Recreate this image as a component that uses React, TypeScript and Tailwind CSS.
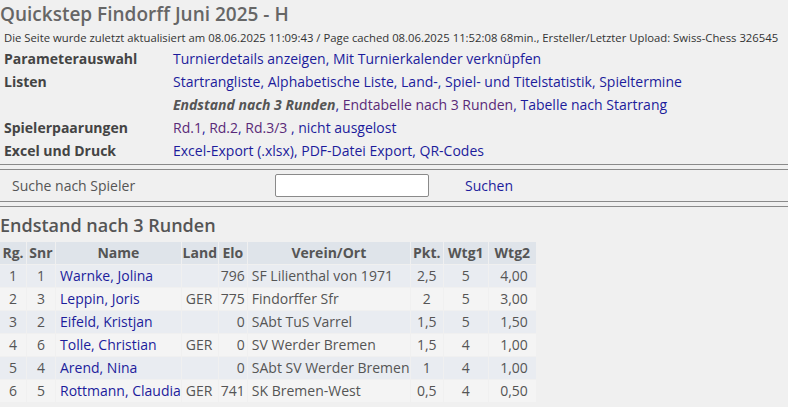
import React from "react";

const F = { fontFamily: '"Open Sans", "Noto Sans", sans-serif' };

const rows = [
  ["1", "1", "Warnke, Jolina", "", "796", "SF Lilienthal von 1971", "2,5", "5", "4,00"],
  ["2", "3", "Leppin, Joris", "GER", "775", "Findorffer Sfr", "2", "5", "3,00"],
  ["3", "2", "Eifeld, Kristjan", "", "0", "SAbt TuS Varrel", "1,5", "5", "1,50"],
  ["4", "6", "Tolle, Christian", "GER", "0", "SV Werder Bremen", "1,5", "4", "1,00"],
  ["5", "4", "Arend, Nina", "", "0", "SAbt SV Werder Bremen", "1", "4", "1,00"],
  ["6", "5", "Rottmann, Claudia", "GER", "741", "SK Bremen-West", "0,5", "4", "0,50"],
];

const L = "text-[#1c1c9c]";
const V = "text-[#5a2a78]";

export default function App() {
  return (
    <div className="w-[788px] h-[407px] overflow-hidden bg-[#f0f0f0] text-[#444]" style={F}>
      <div className="pl-0 pt-[2px] h-[27px] text-[19px] leading-[25px] font-semibold text-[#666]">
        Quickstep Findorff Juni 2025 - H
      </div>
      <div className="pl-[4px] mt-[4px] h-[14px] text-[11.3px] leading-[14px] text-[#333] whitespace-nowrap">
        Die Seite wurde zuletzt aktualisiert am 08.06.2025 11:09:43 / Page cached 08.06.2025 11:52:08 68min., Ersteller/Letzter Upload: Swiss-Chess 326545
      </div>
      <div className="mt-[2px] text-[14px] leading-[20px]">
        <div className="flex h-[23px] items-center">
          <div className="w-[173px] pl-[4px] font-bold text-[#444]">Parameterauswahl</div>
          <div className={L}>Turnierdetails anzeigen, Mit Turnierkalender verknüpfen</div>
        </div>
        <div className="flex h-[23px] items-center">
          <div className="w-[173px] pl-[4px] font-bold text-[#444]">Listen</div>
          <div className={L}>Startrangliste, Alphabetische Liste, Land-, Spiel- und Titelstatistik, Spieltermine</div>
        </div>
        <div className="flex h-[23px] items-center">
          <div className="w-[173px] pl-[4px]"></div>
          <div>
            <span className="font-bold italic text-[#555]">Endstand nach 3 Runden</span>
            <span className={L}>, </span>
            <span className={V}>Endtabelle nach 3 Runden</span>
            <span className={L}>, Tabelle nach Startrang</span>
          </div>
        </div>
        <div className="flex h-[23.5px] items-center">
          <div className="w-[173px] pl-[4px] font-bold text-[#444]">Spielerpaarungen</div>
          <div>
            <span className={V}>Rd.1</span>
            <span className={L}>, </span>
            <span className={V}>Rd.2</span>
            <span className={L}>, </span>
            <span className={V}>Rd.3/3</span>
            <span className={L}> , nicht ausgelost</span>
          </div>
        </div>
        <div className="flex h-[23.5px] items-center">
          <div className="w-[173px] pl-[4px] font-bold text-[#444]">Excel und Druck</div>
          <div className={L}>Excel-Export (.xlsx), PDF-Datei Export, QR-Codes</div>
        </div>
      </div>
      <div className="mt-[1px] border-t border-[#8a8a8a]"></div>
      <div className="mt-[4px] border-t border-[#8a8a8a] h-[32px] flex items-center text-[14px] leading-[20px]">
        <div className="w-[275px] pl-[12px] text-[#555]">Suche nach Spieler</div>
        <div className="w-[154px] h-[23px] bg-white border border-[#8a8a8a] rounded-[2px]"></div>
        <div className={"ml-[36px] " + L}>Suchen</div>
      </div>
      <div className="border-t border-[#8a8a8a]"></div>
      <div className="mt-[4px] border-t border-[#8a8a8a]"></div>
      <div className="pl-0 mt-[6px] text-[18px] leading-[24px] font-semibold text-[#555]">
        Endstand nach 3 Runden
      </div>
      <table className="mt-[4px] text-[14px] leading-[20px] text-[#555] border-separate border-spacing-[1px] -ml-[1px]">
        <thead>
          <tr className="h-[22px] bg-[#dfe4ea] font-bold">
            <th className="w-[26px] text-center font-bold">Rg.</th>
            <th className="w-[28px] text-center font-bold">Snr</th>
            <th className="w-[124px] text-center font-bold">Name</th>
            <th className="w-[36px] text-center font-bold">Land</th>
            <th className="w-[28px] text-center font-bold">Elo</th>
            <th className="w-[162px] text-center font-bold">Verein/Ort</th>
            <th className="w-[32px] text-center font-bold">Pkt.</th>
            <th className="w-[44px] text-center font-bold">Wtg1</th>
            <th className="w-[47px] text-center font-bold">Wtg2</th>
          </tr>
        </thead>
        <tbody>
          {rows.map((r, i) => (
            <tr key={i} className={"h-[22px] " + (i % 2 === 0 ? "bg-[#e9ecf1]" : "bg-[#f4f4f4]")}>
              <td className="text-center">{r[0]}</td>
              <td className="text-center">{r[1]}</td>
              <td className={"pl-[4px] whitespace-nowrap " + L}>{r[2]}</td>
              <td className="pl-[4px]">{r[3]}</td>
              <td className="text-right pr-[2px]">{r[4]}</td>
              <td className="pl-[4px] whitespace-nowrap">{r[5]}</td>
              <td className="text-center">{r[6]}</td>
              <td className="text-center">{r[7]}</td>
              <td className="text-right pr-[8px]">{r[8]}</td>
            </tr>
          ))}
        </tbody>
      </table>
    </div>
  );
}
